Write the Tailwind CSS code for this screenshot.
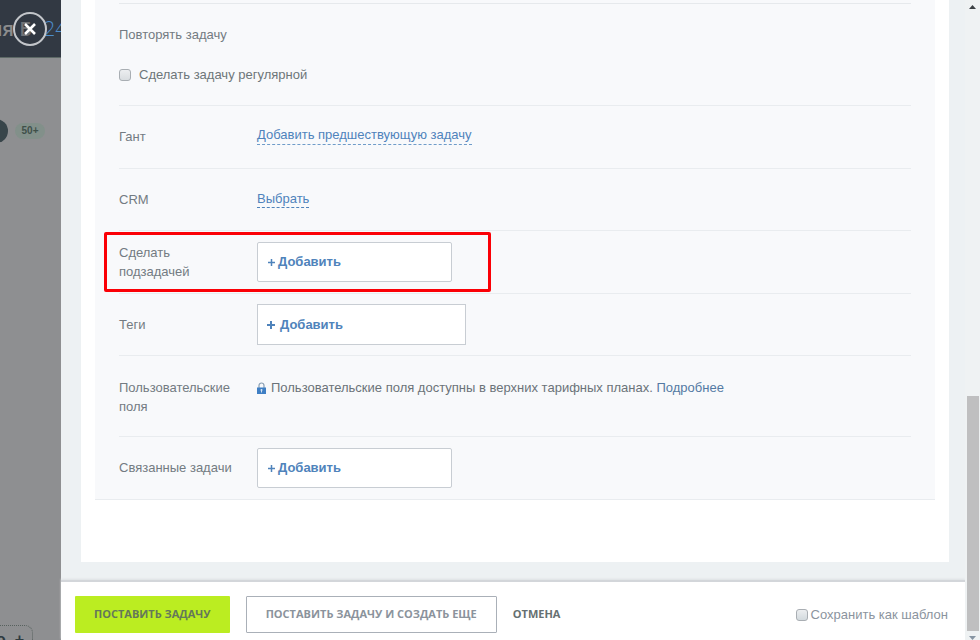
<!DOCTYPE html>
<html lang="ru">
<head>
  <meta charset="UTF-8" />
  <meta name="viewport" content="width=device-width, initial-scale=1.0"/>
  <title>Новая задача</title>
  <script src="https://cdn.jsdelivr.net/npm/@tailwindcss/browser@4"></script>
</head>
<body class="h-screen flex overflow-hidden bg-[#8e8f91] font-['Liberation_Sans',Arial,sans-serif] text-[13px] text-[#737b82]">

  <!-- Dimmed page behind the slider -->
  <aside class="w-[61px] shrink-0 flex flex-col overflow-hidden">
    <div class="relative h-[58px] shrink-0 flex items-center bg-[#323943] border-b border-[#5d6966] font-['Open_Sans',sans-serif] text-xl whitespace-nowrap">
      <span class="-ml-[11px] font-semibold text-[#8b8c8d]">ия Б</span>
      <span class="ml-3 font-light text-[#4d8dcc]">24</span>
      <button aria-label="Закрыть" class="absolute left-[13px] top-3">
        <svg width="34" height="34" viewBox="0 0 34 34" fill="none">
          <circle cx="17" cy="17" r="16" fill="#323943" fill-opacity=".3" stroke="#c3c6ca" stroke-width="2"/>
          <path d="M12 12l10 10M22 12L12 22" stroke="#fff" stroke-width="2.6"/>
        </svg>
      </button>
    </div>
    <div class="mt-[61px] flex items-center gap-[7px]">
      <span class="-ml-4 size-6 rounded-full bg-[#38454a]"></span>
      <span class="w-[30px] h-4 rounded-full bg-[#82908a] text-center text-[10px] leading-4 font-bold text-[#3f504a]">50+</span>
    </div>
    <div class="mt-auto -ml-5 w-[53px] h-[15px] shrink-0 border-t border-r border-dotted border-[#57615e] rounded-tr-lg pt-1 pl-4 text-base leading-5 font-bold text-[#2f3b40] whitespace-nowrap">о&nbsp; +</div>
  </aside>

  <!-- Slider -->
  <main class="flex-1 min-w-0 flex flex-col bg-[#edf1f3]">
    <div class="flex-1 min-h-0 overflow-hidden pl-5 pr-4">
      <div class="bg-white px-3.5 pb-[62px]">
        <div class="bg-[#f8f9fb] border-b border-[#e9ecef] px-6">
          <div class="h-1 border-b border-[#e6e9ec]"></div>

          <section class="h-[102px] border-b border-[#e9ecef] pt-[21px]">
            <h2 class="leading-5">Повторять задачу</h2>
            <label class="mt-5 flex items-center gap-2 leading-5 text-[#6d7679]">
              <input type="checkbox" class="appearance-none size-3 rounded-[3px] border border-[#a9aeb3] bg-linear-to-b from-[#eceef0] to-[#d9dde0]"/>
              Сделать задачу регулярной
            </label>
          </section>

          <div class="min-h-[63px] flex items-center border-b border-[#e9ecef]">
            <span class="w-[138px] shrink-0">Гант</span>
            <a href="#" class="mb-1 border-b border-dashed border-[#6f9cc9] leading-[18px] text-[#4f83bb]">Добавить предшествующую задачу</a>
          </div>

          <div class="min-h-[62px] flex items-center border-b border-[#e9ecef]">
            <span class="w-[138px] shrink-0">CRM</span>
            <a href="#" class="border-b border-dashed border-[#4f83bb] leading-4 text-[#4f83bb]">Выбрать</a>
          </div>

          <div class="relative min-h-[63px] flex items-center border-b border-[#e9ecef]">
            <span class="w-[138px] shrink-0 pr-6 leading-[19px]">Сделать подзадачей</span>
            <button class="w-[195px] h-10 flex items-center gap-[3px] rounded-xs border border-[#c8cdd3] bg-white px-2.5 font-bold text-[#4f83bb]">
              <svg width="7" height="7" viewBox="0 0 7 7" stroke="currentColor" stroke-width="1.5"><path d="M0 3.5h7M3.5 0v7"/></svg>
              Добавить
            </button>
            <div class="absolute -left-[15px] top-px w-[387px] h-[60px] rounded-xs border-3 border-[#fb0006] pointer-events-none"></div>
          </div>

          <div class="min-h-[62px] flex items-center border-b border-[#e9ecef]">
            <span class="w-[138px] shrink-0">Теги</span>
            <button class="w-[209px] h-[41px] flex items-center gap-[5px] border border-[#c8cdd3] bg-white px-[9px] font-bold text-[#4f83bb]">
              <svg width="8" height="8" viewBox="0 0 8 8" stroke="currentColor" stroke-width="2"><path d="M0 4h8M4 0v8"/></svg>
              Добавить
            </button>
          </div>

          <div class="min-h-[81px] flex items-start border-b border-[#e9ecef] pt-[22px]">
            <span class="w-[138px] shrink-0 pr-4 leading-[19px]">Пользовательские поля</span>
            <p class="flex items-center gap-[5px] leading-5 text-[#6b7379]">
              <svg width="9" height="12" viewBox="0 0 9 12" fill="none" class="shrink-0">
                <path d="M2 6V3.5a2.5 2.5 0 0 1 5 0V6" stroke="#8ba0b4" stroke-width="1.2"/>
                <path d="M0 5.5h9V12H0z" fill="#3f7fc4"/>
                <path d="M4.5 7v3.5M3.4 8h2.2" stroke="#d5e3f1"/>
              </svg>
              <span>Пользовательские поля доступны в верхних тарифных планах. <a href="#" class="text-[#5479a3]">Подробнее</a></span>
            </p>
          </div>

          <div class="min-h-[62px] flex items-center">
            <span class="w-[138px] shrink-0">Связанные задачи</span>
            <button class="w-[195px] h-10 flex items-center gap-[3px] rounded-xs border border-[#c8cdd3] bg-white px-2.5 font-bold text-[#4f83bb]">
              <svg width="7" height="7" viewBox="0 0 7 7" stroke="currentColor" stroke-width="1.5"><path d="M0 3.5h7M3.5 0v7"/></svg>
              Добавить
            </button>
          </div>
        </div>
      </div>
    </div>

    <!-- Footer buttons -->
    <footer class="shrink-0 flex items-center bg-white border-t-2 border-[#d3d6da] pl-3.5 pr-[17px] pt-3.5 pb-[7px] shadow-[0_-1px_2px_#dde1e4]">
      <button class="h-[37px] rounded-[1px] bg-[#bbed21] px-[19px] font-['Open_Sans',sans-serif] text-[11px] font-bold text-[#65785a]">ПОСТАВИТЬ ЗАДАЧУ</button>
      <button class="ml-4 h-[37px] rounded-[1px] border border-[#aab0b8] px-[19px] font-['Open_Sans',sans-serif] text-[11px] font-bold text-[#8b939c]">ПОСТАВИТЬ ЗАДАЧУ И СОЗДАТЬ ЕЩЕ</button>
      <button class="ml-4 font-['Open_Sans',sans-serif] text-[11px] font-bold text-[#667071]">ОТМЕНА</button>
      <label class="ml-auto flex items-center gap-[3px] text-[#8b949e]">
        <input type="checkbox" class="appearance-none size-3 rounded-[3px] border border-[#a9aeb3] bg-linear-to-b from-[#eceef0] to-[#d3dade]"/>
        Сохранить как шаблон
      </label>
    </footer>
  </main>

  <!-- Scrollbar -->
  <div class="w-[15px] shrink-0 flex flex-col items-center bg-[#eff2f3]">
    <svg width="7" height="4" viewBox="0 0 7 4" class="mt-[5px] shrink-0" fill="#3c4145"><path d="M3.5 0L7 4H0z"/></svg>
    <div class="mt-auto w-3 h-[235px] bg-[#bfbfc0]"></div>
    <svg width="7" height="4" viewBox="0 0 7 4" class="mt-[5px] shrink-0" fill="#8795a3"><path d="M0 0h7L3.5 4z"/></svg>
  </div>

</body>
</html>
